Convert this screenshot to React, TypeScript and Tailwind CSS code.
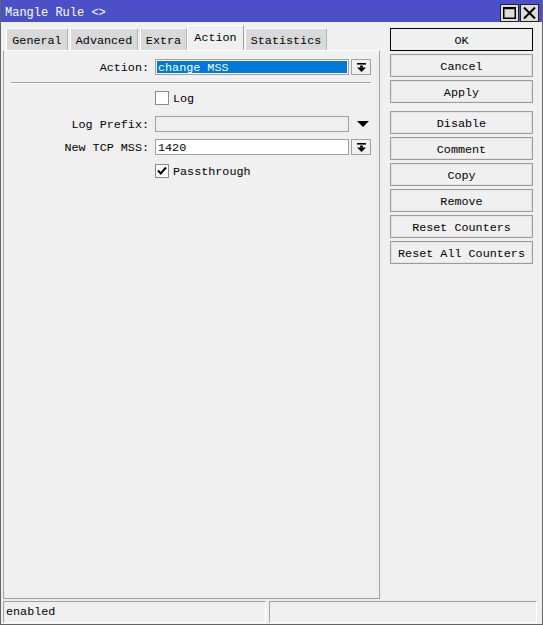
import React from "react";

function DropBtn() {
  return (
    <div className="ml-[2px] w-[20px] h-[16px] border border-[#a0a0a0] bg-[#f0f0f0] flex items-center justify-center">
      <svg width="9" height="9" viewBox="0 0 9 9">
        <rect x="0" y="0" width="9" height="1.6" fill="#000" />
        <rect x="3" y="2.6" width="3" height="2" fill="#000" />
        <polygon points="0,4.4 9,4.4 4.5,9" fill="#000" />
      </svg>
    </div>
  );
}

function Check({ checked }: { checked?: boolean }) {
  return (
    <div className="w-[14px] h-[14px] border border-[#8a8a8a] bg-white flex items-center justify-center">
      {checked && (
        <svg width="10" height="10" viewBox="0 0 10 10">
          <polyline points="1,4.5 3.8,7.5 9,1.5" fill="none" stroke="#000" strokeWidth="2" />
        </svg>
      )}
    </div>
  );
}

function Btn({ label, primary }: { label: string; primary?: boolean }) {
  return (
    <div
      className={
        "h-[23px] flex items-center justify-center bg-[#f0f0f0] border " +
        (primary ? "border-black" : "border-[#9c9c9c] shadow-[inset_0_0_0_1px_#e4e4e4]")
      }
    >
      <span className="translate-y-[2px]">{label}</span>
    </div>
  );
}

export default function App() {
  const tabBase = "h-[22px] flex items-center justify-center bg-[#d9d9d9] border-t border-l border-white border-r border-r-[#b4b4b4]";
  return (
    <div className="w-[543px] h-[625px] bg-[#f0f0f0] border-x border-b border-[#646464] flex flex-col font-[Liberation_Mono,monospace] text-[11.75px] text-black leading-none overflow-hidden">
      {/* Title bar */}
      <div className="h-[22px] bg-[#4b50c8] -mx-px flex items-start pr-[4px] shrink-0">
        <span className="text-white text-[12px] ml-[5px] mt-[7px]">Mangle Rule &lt;&gt;</span>
        <div className="ml-auto flex gap-[1px] mt-[4px]">
          <div className="w-[19px] h-[18px] bg-[#dcdcdc] border border-[#222] flex items-center justify-center">
            <svg width="13" height="12" viewBox="0 0 13 12">
              <rect x="0.75" y="1" width="11.5" height="10.25" fill="none" stroke="#000" strokeWidth="1.5" />
              <rect x="0" y="0" width="13" height="2.2" fill="#000" />
            </svg>
          </div>
          <div className="w-[19px] h-[18px] bg-[#dcdcdc] border border-[#222] flex items-center justify-center">
            <svg width="13" height="12" viewBox="0 0 13 12">
              <path d="M1 0.5 L12 11.5 M12 0.5 L1 11.5" stroke="#000" strokeWidth="2" />
            </svg>
          </div>
        </div>
      </div>

      {/* Body */}
      <div className="flex-1 flex min-h-0">
        {/* Left */}
        <div className="ml-[2px] w-[377px] flex flex-col pt-[3px]">
          <div className="h-[25px] flex items-end pl-[3px] shrink-0">
            <div className={tabBase + " w-[62px]"}>
              <span className="translate-y-[2px]">General</span>
            </div>
            <div className={tabBase + " w-[68px] ml-[2px]"}>
              <span className="translate-y-[2px]">Advanced</span>
            </div>
            <div className={tabBase + " w-[47px] ml-[2px]"}>
              <span className="translate-y-[2px]">Extra</span>
            </div>
            <div className="h-[25px] w-[57px] flex items-center justify-center bg-[#f0f0f0] border-t border-l border-white border-r border-r-[#a0a0a0] pb-[1px]">
              <span className="translate-y-[1px]">Action</span>
            </div>
            <div className={tabBase + " w-[82px] ml-[1px]"}>
              <span className="translate-y-[2px]">Statistics</span>
            </div>
          </div>
          <div className="flex-1 border border-[#a0a0a0] border-t-white flex flex-col pt-[8px]">
            {/* Action row */}
            <div className="flex items-center h-[16px]">
              <div className="w-[145px] text-right translate-y-[1.5px]">Action:</div>
              <div className="ml-[6px] w-[194px] h-[16px] border border-[#a0a0a0] bg-white p-[1px]">
                <div className="h-full bg-[#0078d7] text-white flex items-center pl-[1px]">
                  <span className="translate-y-[1.5px]">change MSS</span>
                </div>
              </div>
              <DropBtn />
            </div>
            {/* separator */}
            <div className="mt-[7px] ml-[7px] w-[360px] h-[2px] border-t border-[#a0a0a0] border-b border-b-white" />
            {/* Log */}
            <div className="mt-[7px] flex items-center h-[14px]">
              <div className="w-[145px]" />
              <div className="ml-[6px]">
                <Check />
              </div>
              <span className="ml-[4px] translate-y-[1.5px]">Log</span>
            </div>
            {/* Log Prefix */}
            <div className="mt-[11px] flex items-center h-[16px]">
              <div className="w-[145px] text-right translate-y-[1.5px]">Log Prefix:</div>
              <div className="ml-[6px] w-[194px] h-[16px] border border-[#a0a0a0] bg-[#f0f0f0]" />
              <svg className="ml-[8px]" width="12" height="6" viewBox="0 0 12 6">
                <polygon points="0,0 12,0 6,6" fill="#000" />
              </svg>
            </div>
            {/* New TCP MSS */}
            <div className="mt-[7px] flex items-center h-[16px]">
              <div className="w-[145px] text-right translate-y-[1.5px]">New TCP MSS:</div>
              <div className="ml-[6px] w-[194px] h-[16px] border border-[#a0a0a0] bg-white flex items-center pl-[2px]">
                <span className="translate-y-[1.5px]">1420</span>
              </div>
              <DropBtn />
            </div>
            {/* Passthrough */}
            <div className="mt-[9px] flex items-center h-[14px]">
              <div className="w-[145px]" />
              <div className="ml-[6px]">
                <Check checked />
              </div>
              <span className="ml-[4px] translate-y-[1.5px]">Passthrough</span>
            </div>
          </div>
        </div>

        {/* Right buttons */}
        <div className="ml-[10px] w-[143px] flex flex-col pt-[6px]">
          <div className="flex flex-col gap-[3px]">
            <Btn label="OK" primary />
            <Btn label="Cancel" />
            <Btn label="Apply" />
          </div>
          <div className="flex flex-col gap-[3px] mt-[8px]">
            <Btn label="Disable" />
            <Btn label="Comment" />
            <Btn label="Copy" />
            <Btn label="Remove" />
            <Btn label="Reset Counters" />
            <Btn label="Reset All Counters" />
          </div>
        </div>
      </div>

      {/* Status bar */}
      <div className="mt-[2px] mb-[1px] h-[22px] flex pl-[2px] shrink-0">
        <div className="w-[263px] h-full border border-[#a0a0a0] border-b-white border-r-white flex items-center pl-[2px]">
          <span className="translate-y-[1px]">enabled</span>
        </div>
        <div className="ml-[3px] w-[268px] h-full border border-[#a0a0a0] border-b-white border-r-white" />
      </div>
    </div>
  );
}
